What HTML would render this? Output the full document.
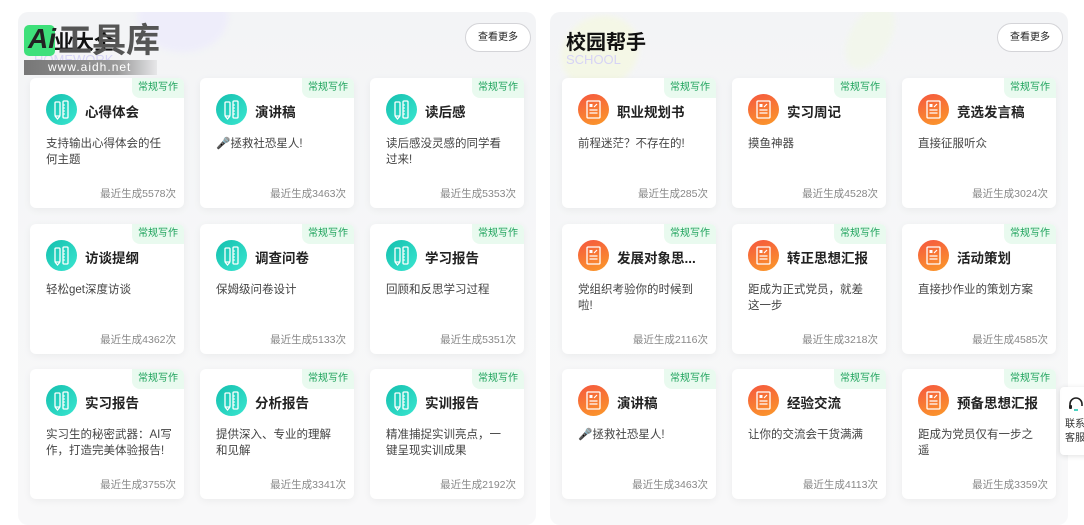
<!DOCTYPE html>
<html><head><meta charset="utf-8"><style>
*{margin:0;padding:0;box-sizing:border-box}
body{width:1084px;height:525px;background:#fff;font-family:"Liberation Sans","Noto Sans CJK SC",sans-serif;position:relative;overflow:hidden}
.panel{position:absolute;top:12px;width:518px;height:513px;background:linear-gradient(180deg,#f3f4f6 0%,#f6f7f8 50%,#f8f8f9 100%);border-radius:10px;overflow:hidden}
.blob{position:absolute;border-radius:50%;filter:blur(3px)}
.ptitle{position:absolute;left:16px;top:14px;font-size:20px;font-weight:bold;color:#111}
.psub{position:absolute;left:16px;top:40px;font-size:13px;color:#d6d3f5;font-weight:500}
.more{position:absolute;right:5px;top:11px;width:66px;height:29px;border:1px solid #d4d4d8;border-radius:15px;background:#fff;font-size:10px;color:#222;text-align:center;line-height:27px}
.card{position:absolute;width:154px;height:130px;background:#fff;border-radius:6px;box-shadow:0 2px 8px rgba(0,0,0,.05)}
.tag{position:absolute;right:0;top:0;width:52px;height:20px;background:#e9faef;color:#1ea35c;font-size:10px;line-height:20px;text-align:center;border-radius:0 6px 0 8px}
.ic{position:absolute;left:16px;top:16px;width:31px;height:31px;border-radius:50%}
.ic.t{background:linear-gradient(135deg,#14bfae,#3ae6d0)}
.ic.o{background:linear-gradient(160deg,#f5573f,#fb9a2a)}
.ic svg{position:absolute;left:0;top:0}
.ct{position:absolute;left:55px;top:23px;font-size:13.5px;font-weight:bold;color:#222;white-space:nowrap}
.cd{position:absolute;left:16px;top:58px;width:126px;font-size:11.5px;line-height:16px;color:#444}
.cf{position:absolute;right:8px;top:108px;font-size:10.5px;color:#888}
</style></head><body>

<div class="panel" style="left:18px">
 <div class="blob" style="left:120px;top:-30px;width:90px;height:70px;background:#eeedfa"></div>
 <div class="ptitle">作业大全</div>
 <div class="psub">HOMEWORK</div>
 <div class="more">查看更多</div>
</div>
<div class="panel" style="left:550px">
 <div class="blob" style="left:10px;top:5px;width:80px;height:70px;background:#f4f7e6;transform:rotate(-30deg)"></div>
 <div class="blob" style="left:300px;top:-10px;width:40px;height:70px;background:#f2f6ec;transform:rotate(30deg)"></div>
 <div class="ptitle">校园帮手</div>
 <div class="psub">SCHOOL</div>
 <div class="more">查看更多</div>
</div>

<!-- watermark logo -->
<div style="position:absolute;left:24px;top:25px;width:31px;height:31px;background:#3ee07a;border-radius:5px"></div>
<div style="position:absolute;left:28px;top:23px;font-size:28px;font-style:italic;font-weight:bold;color:#222;line-height:32px">Ai</div>
<div style="position:absolute;left:58px;top:21px;font-size:34px;font-weight:bold;color:#555;line-height:40px">工具库</div>
<div style="position:absolute;left:24px;top:60px;width:133px;height:15px;background:linear-gradient(90deg,#777,#999 70%,rgba(200,200,200,.3))"></div>
<div style="position:absolute;left:48px;top:60px;font-size:12px;color:#fff;letter-spacing:1px;line-height:15px">www.aidh.net</div>

<!-- customer service -->
<div style="position:absolute;left:1060px;top:387px;width:30px;height:68px;background:#fff;box-shadow:0 1px 6px rgba(0,0,0,.12);border-radius:4px 0 0 4px">
 <svg width="20" height="20" style="position:absolute;left:6px;top:8px" viewBox="0 0 20 20"><path d="M4 11V9a6 6 0 0 1 12 0v2" fill="none" stroke="#222" stroke-width="1.6"/><rect x="3" y="10" width="3" height="4" rx="1" fill="#222"/><path d="M8 15h4" stroke="#1ec7b2" stroke-width="1.6"/></svg>
 <div style="position:absolute;left:5px;top:31px;font-size:10px;line-height:14px;color:#333;width:24px">联系客服</div>
</div>

<div id="cards"></div>
<script>
var L=[["心得体会","支持输出心得体会的任何主题","最近生成5578次"],["演讲稿","🎤拯救社恐星人!","最近生成3463次"],["读后感","读后感没灵感的同学看过来!","最近生成5353次"],
["访谈提纲","轻松get深度访谈","最近生成4362次"],["调查问卷","保姆级问卷设计","最近生成5133次"],["学习报告","回顾和反思学习过程","最近生成5351次"],
["实习报告","实习生的秘密武器：AI写作，打造完美体验报告!","最近生成3755次"],["分析报告","提供深入、专业的理解和见解","最近生成3341次"],["实训报告","精准捕捉实训亮点，一键呈现实训成果","最近生成2192次"]];
var R=[["职业规划书","前程迷茫？不存在的!","最近生成285次"],["实习周记","摸鱼神器","最近生成4528次"],["竞选发言稿","直接征服听众","最近生成3024次"],
["发展对象思...","党组织考验你的时候到啦!","最近生成2116次"],["转正思想汇报","距成为正式党员，就差这一步","最近生成3218次"],["活动策划","直接抄作业的策划方案","最近生成4585次"],
["演讲稿","🎤拯救社恐星人!","最近生成3463次"],["经验交流","让你的交流会干货满满","最近生成4113次"],["预备思想汇报","距成为党员仅有一步之遥","最近生成3359次"]];
var tI='<svg width="31" height="31" viewBox="0 0 31 31"><rect x="9" y="8" width="5" height="14" rx="1" fill="none" stroke="#fff" stroke-width="1.3"/><path d="M9 22l2.5 3 2.5-3" fill="none" stroke="#fff" stroke-width="1.3"/><rect x="17" y="7" width="5" height="17" rx="1" fill="none" stroke="#fff" stroke-width="1.3"/><path d="M17 11h2M17 14h2M17 17h2M17 20h2" stroke="#fff" stroke-width="1"/></svg>';
var oI='<svg width="31" height="31" viewBox="0 0 31 31"><rect x="9" y="7" width="13" height="17" rx="1" fill="none" stroke="#fff" stroke-width="1.3"/><rect x="11.5" y="10" width="3" height="3" fill="#fff"/><path d="M16 13l3-3M11.5 16h8M11.5 19h8" stroke="#fff" stroke-width="1.2"/></svg>';
var h='',xs=[30,200,370],xr=[562,732,902],ys=[78,224,369];
function mk(d,x,y,o){return '<div class="card" style="left:'+x+'px;top:'+y+'px"><div class="tag">常规写作</div><div class="ic '+(o?'o':'t')+'">'+(o?oI:tI)+'</div><div class="ct">'+d[0]+'</div><div class="cd">'+d[1]+'</div><div class="cf">'+d[2]+'</div></div>';}
for(var i=0;i<9;i++){h+=mk(L[i],xs[i%3],ys[Math.floor(i/3)],0);h+=mk(R[i],xr[i%3],ys[Math.floor(i/3)],1);}
document.getElementById('cards').innerHTML=h;
</script>
</body></html>
